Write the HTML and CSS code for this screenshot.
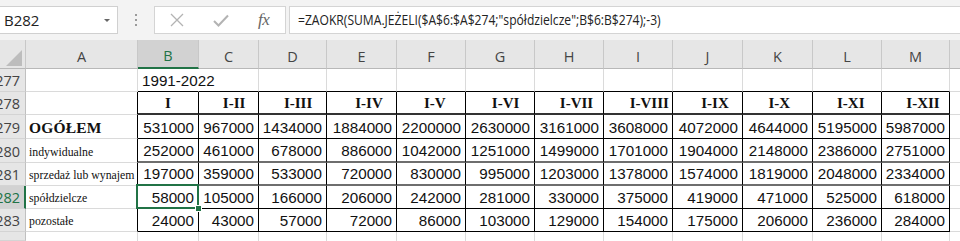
FILE: index.html
```html
<!DOCTYPE html>
<html lang="pl">

<head>
    <meta charset="UTF-8">
    <meta name="viewport" content="width=device-width, initial-scale=1.0">
    <title>Arkusz - mieszkania oddane do użytkowania</title>
    <link rel="stylesheet" href="styles.css">
</head>

<body>
    <div class="formula-bar">
        <div class="name-box">
            <span>B282</span>
            <span class="drop-arrow"></span>
        </div>
        <div class="grip">
            <span></span><span></span><span></span>
        </div>
        <div class="fx-buttons">
            <svg class="btn-icon" width="14" height="14" viewBox="0 0 14 14">
                <path d="M1 1 L13 13 M13 1 L1 13" stroke="#b3b3b3" stroke-width="1.3" fill="none" />
            </svg>
            <svg class="btn-icon" width="16" height="13" viewBox="0 0 16 13">
                <path d="M1 7 L5.5 11.5 L15 1.5" stroke="#b3b3b3" stroke-width="2" fill="none" />
            </svg>
            <span class="fx">fx</span>
        </div>
        <div class="formula-input">
            <span class="formula-text">=ZAOKR(SUMA.JEŻELI($A$6:$A$274;"spółdzielcze";B$6:B$274);-3)</span>
        </div>
    </div>

    <div class="sheet">
        <!-- column headers -->
        <div class="hdr corner"><span class="tri"></span></div>
        <div class="hdr col">A</div>
        <div class="hdr col active">B</div>
        <div class="hdr col">C</div>
        <div class="hdr col">D</div>
        <div class="hdr col">E</div>
        <div class="hdr col">F</div>
        <div class="hdr col">G</div>
        <div class="hdr col">H</div>
        <div class="hdr col">I</div>
        <div class="hdr col">J</div>
        <div class="hdr col">K</div>
        <div class="hdr col">L</div>
        <div class="hdr col">M</div>
        <div class="hdr col"></div>

        <!-- 277 -->
        <div class="hdr row">277</div>
        <div class="cell"></div>
        <div class="cell top spill">1991-2022</div>
        <div class="cell top"></div>
        <div class="cell top"></div>
        <div class="cell top"></div>
        <div class="cell top"></div>
        <div class="cell top"></div>
        <div class="cell top"></div>
        <div class="cell top"></div>
        <div class="cell top"></div>
        <div class="cell top"></div>
        <div class="cell top"></div>
        <div class="cell top"></div>
        <div class="cell"></div>

        <!-- 278 -->
        <div class="hdr row">278</div>
        <div class="cell edge"></div>
        <div class="cell t head thick">I</div>
        <div class="cell t head thick">   I-II</div>
        <div class="cell t head thick">   I-III</div>
        <div class="cell t head thick">    I-IV</div>
        <div class="cell t head thick">  I-V</div>
        <div class="cell t head thick">   I-VI</div>
        <div class="cell t head thick">    I-VII</div>
        <div class="cell t head thick">      I-VIII</div>
        <div class="cell t head thick">    I-IX</div>
        <div class="cell t head thick"> I-X</div>
        <div class="cell t head thick">  I-XI</div>
        <div class="cell t head thick">    I-XII</div>
        <div class="cell"></div>

        <!-- 279 -->
        <div class="hdr row">279</div>
        <div class="cell edge label total">OGÓŁEM</div>
        <div class="cell t num">531000</div>
        <div class="cell t num">967000</div>
        <div class="cell t num">1434000</div>
        <div class="cell t num">1884000</div>
        <div class="cell t num">2200000</div>
        <div class="cell t num">2630000</div>
        <div class="cell t num">3161000</div>
        <div class="cell t num">3608000</div>
        <div class="cell t num">4072000</div>
        <div class="cell t num">4644000</div>
        <div class="cell t num">5195000</div>
        <div class="cell t num">5987000</div>
        <div class="cell"></div>

        <!-- 280 -->
        <div class="hdr row">280</div>
        <div class="cell edge label">indywidualne</div>
        <div class="cell t num soft">252000</div>
        <div class="cell t num soft">461000</div>
        <div class="cell t num soft">678000</div>
        <div class="cell t num soft">886000</div>
        <div class="cell t num soft">1042000</div>
        <div class="cell t num soft">1251000</div>
        <div class="cell t num soft">1499000</div>
        <div class="cell t num soft">1701000</div>
        <div class="cell t num soft">1904000</div>
        <div class="cell t num soft">2148000</div>
        <div class="cell t num soft">2386000</div>
        <div class="cell t num soft">2751000</div>
        <div class="cell"></div>

        <!-- 281 -->
        <div class="hdr row">281</div>
        <div class="cell edge label">sprzedaż lub wynajem</div>
        <div class="cell t num soft">197000</div>
        <div class="cell t num soft">359000</div>
        <div class="cell t num soft">533000</div>
        <div class="cell t num soft">720000</div>
        <div class="cell t num soft">830000</div>
        <div class="cell t num soft">995000</div>
        <div class="cell t num soft">1203000</div>
        <div class="cell t num soft">1378000</div>
        <div class="cell t num soft">1574000</div>
        <div class="cell t num soft">1819000</div>
        <div class="cell t num soft">2048000</div>
        <div class="cell t num soft">2334000</div>
        <div class="cell"></div>

        <!-- 282 -->
        <div class="hdr row active">282</div>
        <div class="cell edge label">spółdzielcze</div>
        <div class="cell t num selected">58000</div>
        <div class="cell t num">105000</div>
        <div class="cell t num">166000</div>
        <div class="cell t num">206000</div>
        <div class="cell t num">242000</div>
        <div class="cell t num">281000</div>
        <div class="cell t num">330000</div>
        <div class="cell t num">375000</div>
        <div class="cell t num">419000</div>
        <div class="cell t num">471000</div>
        <div class="cell t num">525000</div>
        <div class="cell t num">618000</div>
        <div class="cell"></div>

        <!-- 283 -->
        <div class="hdr row">283</div>
        <div class="cell edge label">pozostałe</div>
        <div class="cell t num">24000</div>
        <div class="cell t num">43000</div>
        <div class="cell t num">57000</div>
        <div class="cell t num">72000</div>
        <div class="cell t num">86000</div>
        <div class="cell t num">103000</div>
        <div class="cell t num">129000</div>
        <div class="cell t num">154000</div>
        <div class="cell t num">175000</div>
        <div class="cell t num">206000</div>
        <div class="cell t num">236000</div>
        <div class="cell t num">284000</div>
        <div class="cell"></div>

        <!-- 284 (only its top shows) -->
        <div class="hdr row stub"></div>
        <div class="cell stub"></div>
        <div class="cell stub"></div>
        <div class="cell stub"></div>
        <div class="cell stub"></div>
        <div class="cell stub"></div>
        <div class="cell stub"></div>
        <div class="cell stub"></div>
        <div class="cell stub"></div>
        <div class="cell stub"></div>
        <div class="cell stub"></div>
        <div class="cell stub"></div>
        <div class="cell stub"></div>
        <div class="cell stub"></div>
        <div class="cell stub"></div>
    </div>
</body>

</html>
```

FILE: styles.css
```css
body {
    margin: 0;
    padding: 0;
    width: 960px;
    height: 241px;
    overflow: hidden;
    background-color: #fff;
    font-family: "Open Sans", "Noto Sans", sans-serif;
    color: #222;
}

/* formula bar */

.formula-bar {
    height: 40px;
    box-sizing: border-box;
    padding-top: 6px;
    display: flex;
    align-items: flex-start;
    background-color: #f3f3f3;
}

.name-box {
    width: 119px;
    height: 28px;
    margin-left: -1px;
    box-sizing: border-box;
    padding: 0 7px 0 4px;
    display: flex;
    align-items: center;
    justify-content: space-between;
    background-color: #fff;
    border: 1px solid #d0d0d0;
    font-size: 15px;
    color: #222;
}

.drop-arrow {
    width: 0;
    height: 0;
    border-left: 3px solid transparent;
    border-right: 3px solid transparent;
    border-top: 3px solid #666;
}

.grip {
    width: 36px;
    height: 28px;
    display: flex;
    flex-direction: column;
    align-items: center;
    justify-content: center;
    gap: 3px;
}

.grip span {
    width: 2px;
    height: 2px;
    background-color: #9a9a9a;
}

.fx-buttons {
    width: 132px;
    height: 28px;
    box-sizing: border-box;
    display: flex;
    align-items: center;
    padding-left: 15px;
    background-color: #fff;
    border: 1px solid #d4d4d4;
}

.btn-icon {
    display: block;
}

.btn-icon + .btn-icon {
    margin-left: 29px;
}

.fx {
    margin-left: 29px;
    font-family: "Liberation Serif", serif;
    font-style: italic;
    font-size: 17px;
    color: #666;
    letter-spacing: -0.5px;
}

.formula-input {
    flex: 1;
    height: 28px;
    margin-left: 3px;
    margin-right: -4px;
    box-sizing: border-box;
    padding-left: 8px;
    line-height: 26px;
    background-color: #fff;
    border: 1px solid #d4d4d4;
    font-size: 14.5px;
    color: #222;
    white-space: nowrap;
    overflow: hidden;
}

/* the bar shows the formula narrower than the font draws it */
.formula-text {
    display: inline-block;
    transform: scaleX(0.835);
    transform-origin: left center;
}

/* grid */

.sheet {
    display: grid;
    grid-template-columns: 26px 112px 61px 60px 68px 70px 69px 69px 69px 69px 70px 70px 69px 68px 40px;
    grid-template-rows: 29px 23px 23px 24px 24px 23px 23px 23px 9px;
}

.hdr {
    box-sizing: border-box;
    background-color: #e6e6e6;
    color: #444;
    font-size: 14.5px;
    white-space: nowrap;
    overflow: hidden;
}

.hdr.col {
    display: flex;
    align-items: flex-end;
    justify-content: center;
    padding-bottom: 2px;
    border-right: 1px solid #c8c8c8;
    border-bottom: 1px solid #b8b8b8;
}

.hdr.col.active {
    background-color: #d2d2d2;
    color: #217346;
    border-bottom: 2px solid #217346;
}

.hdr.corner {
    position: relative;
    border-right: 1px solid #c8c8c8;
    border-bottom: 1px solid #b8b8b8;
}

.tri {
    position: absolute;
    right: 3px;
    bottom: 2px;
    width: 0;
    height: 0;
    border-left: 16px solid transparent;
    border-bottom: 16px solid #bdbdbd;
}

.hdr.row {
    display: flex;
    align-items: flex-end;
    justify-content: flex-end;
    padding: 0 5px 0 0;
    line-height: 21px;
    border-right: 1px solid #c0c0c0;
    border-bottom: 1px solid #d4d4d4;
}

.hdr.row.active {
    background-color: #d2d2d2;
    color: #217346;
    border-right: 2px solid #217346;
    padding-right: 4px;
}

.cell {
    box-sizing: border-box;
    display: flex;
    align-items: flex-end;
    padding: 0 4px 1px 4px;
    border-right: 1px solid #dadada;
    border-bottom: 1px solid #dadada;
    font-family: "Liberation Sans", Arial, sans-serif;
    font-size: 15.2px;
    line-height: 18px;
    color: #111;
    white-space: nowrap;
    overflow: hidden;
}

.stub {
    border-bottom: none;
}

.cell.spill {
    overflow: visible;
    position: relative;
    z-index: 1;
    border-right-color: transparent;
}

.cell.top {
    border-bottom-color: #000;
}

.cell.edge {
    border-right-color: #000;
}

.cell.t {
    border-right-color: #000;
    border-bottom-color: #000;
}

.cell.thick {
    border-bottom: 2px solid #333;
}

.cell.soft {
    border-bottom: 2px solid #6e6e6e;
}

.cell.head {
    justify-content: center;
    white-space: pre;
    font-family: "Liberation Serif", "Times New Roman", serif;
    font-weight: bold;
    font-size: 15px;
    padding-bottom: 1px;
}

.cell.num {
    justify-content: flex-end;
}

.cell.label {
    padding-left: 3px;
    font-family: "Liberation Serif", "Times New Roman", serif;
    font-size: 11.8px;
    padding-bottom: 1px;
}

.cell.label.total {
    font-weight: bold;
    font-size: 15.5px;
    letter-spacing: 0.2px;
}

.cell.selected {
    position: relative;
    overflow: visible;
}

.cell.selected::before {
    content: "";
    position: absolute;
    left: -2px;
    top: -2px;
    right: -1px;
    bottom: -1px;
    border: 2px solid #217346;
}

.cell.selected::after {
    content: "";
    position: absolute;
    right: -4px;
    bottom: -4px;
    width: 5px;
    height: 5px;
    background-color: #217346;
    border: 1px solid #fff;
}
```
